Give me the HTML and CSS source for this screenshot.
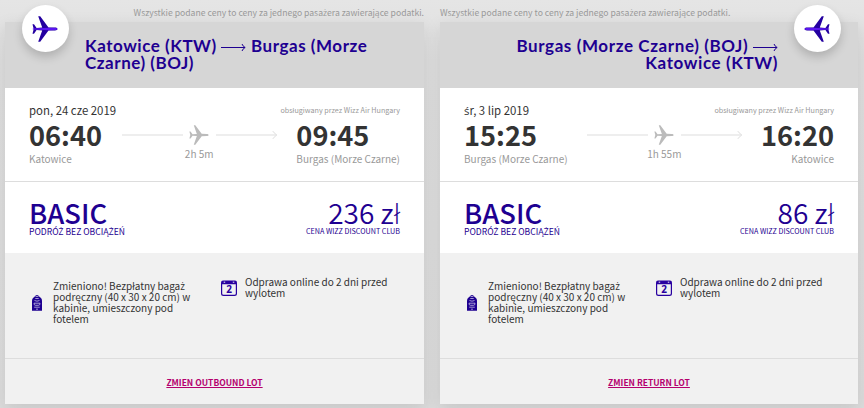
FILE: index.html
```html
<!DOCTYPE html>
<html lang="pl">
  <head>
    <meta charset="UTF-8" />
    <meta name="viewport" content="width=device-width, initial-scale=1.0" />
    <title>Wybrane loty</title>
    <link rel="stylesheet" href="styles.css" />
  </head>
  <body>
    <!-- shared icons -->
    <svg class="sprite">
      <symbol id="plane" viewBox="0 0 26 26">
        <path d="M25.5 13C25.5 12.3 24.5 11.6 23 11.6L16.5 11.4L8.2 0.3L6.2 0.2L10.2 11.6L4.6 12L2 8.3L0.5 8.3L1.7 13L0.5 17.7L2 17.7L4.6 14L10.2 14.4L6.2 25.8L8.2 25.7L16.5 14.6L23 14.4C24.5 14.4 25.5 13.7 25.5 13Z" />
        <path class="hull" d="M0.8 12.5L17 11.7L24.2 12L25.5 13L24.2 14L17 14.2L0.8 13.5Z" />
      </symbol>
      <symbol id="bag" viewBox="0 0 10 16">
        <path class="bag-line" d="M3.2 3V1.6Q3.2 0.6 5 0.6Q6.8 0.6 6.8 1.6V3" />
        <path class="bag-body" d="M0 15.8V6Q0 2 4 1.8H6Q10 2 10 6V15.8Z" />
        <path class="bag-cut" d="M3.3 3.5H6.7M2.5 5.5Q5 6.9 7.5 5.5M2 8.2H8M2 8.2Q1.8 10.3 3.5 10.3H6.5Q8.2 10.3 8 8.2M2.2 12.2H7.8M4 14.2H6" />
      </symbol>
      <symbol id="calendar" viewBox="0 0 16 16">
        <path class="cal-frame" d="M0.6 4V13.5Q0.6 15.4 2.5 15.4H13.5Q15.4 15.4 15.4 13.5V4" />
        <path d="M0 4.2V2.5Q0 0.5 2 0.5H14Q16 0.5 16 2.5V4.2Z" />
        <path class="cal-dots" d="M2.7 2.2H4.2M11.8 2.2H13.3" />
        <text x="8.2" y="13" text-anchor="middle">2</text>
      </symbol>
      <symbol id="arrow" viewBox="0 0 25 9">
        <path d="M0 4.5H24M21 1Q22.2 3.8 24.2 4.5Q22.2 5.2 21 8" />
      </symbol>
    </svg>

    <main class="flights">
      <section class="flight outbound">
        <p class="note">Wszystkie podane ceny to ceny za jednego pasa<span class="pl">ż</span>era zawierające podatki.</p>
        <div class="card">
          <header class="card-header">
            <div class="badge">
              <svg><use href="#plane" /></svg>
            </div>
            <h2>Katowice (KTW) <svg class="arrow"><use href="#arrow" /></svg> Burgas (Morze<br />Czarne) (BOJ)</h2>
          </header>
          <div class="info">
            <div class="info-top">
              <span class="date">pon, 24 cze 2019</span>
              <span class="carrier">obsługiwany przez Wizz Air Hungary</span>
            </div>
            <div class="times">
              <div class="stop">
                <strong>06:40</strong>
                <span class="city">Katowice</span>
              </div>
              <div class="route">
                <div class="track">
                  <i class="line"></i>
                  <svg class="plane"><use href="#plane" /></svg>
                  <i class="line end"></i>
                </div>
                <span class="duration">2h 5m</span>
              </div>
              <div class="stop">
                <strong>09:45</strong>
                <span class="city">Burgas (Morze Czarne)</span>
              </div>
            </div>
          </div>
          <div class="fare">
            <div>
              <div class="fare-name">BASIC</div>
              <div class="fare-desc">PODRÓ<span class="pl">Ż</span> BEZ OBCIĄ<span class="pl">Ż</span>EŃ</div>
            </div>
            <div class="fare-right">
              <div class="price">236 zł</div>
              <div class="club">CENA WIZZ DISCOUNT CLUB</div>
            </div>
          </div>
          <div class="features">
            <div class="feature baggage">
              <svg class="bag"><use href="#bag" /></svg>
              <p>Zmieniono! Bezpłatny baga<span class="pl">ż</span><br />podręczny (40 x 30 x 20 cm) w<br />kabinie, umieszczony pod<br />fotelem</p>
            </div>
            <div class="feature checkin">
              <svg class="calendar"><use href="#calendar" /></svg>
              <p>Odprawa online do 2 dni przed<br />wylotem</p>
            </div>
          </div>
          <footer class="card-footer"><a href="#">ZMIEN OUTBOUND LOT</a></footer>
        </div>
      </section>

      <section class="flight return">
        <p class="note">Wszystkie podane ceny to ceny za jednego pasa<span class="pl">ż</span>era zawierające podatki.</p>
        <div class="card">
          <header class="card-header">
            <div class="badge">
              <svg><use href="#plane" /></svg>
            </div>
            <h2>Burgas (Morze Czarne) (BOJ) <svg class="arrow"><use href="#arrow" /></svg><br />Katowice (KTW)</h2>
          </header>
          <div class="info">
            <div class="info-top">
              <span class="date"><span class="pl">ś</span>r, 3 lip 2019</span>
              <span class="carrier">obsługiwany przez Wizz Air Hungary</span>
            </div>
            <div class="times">
              <div class="stop">
                <strong>15:25</strong>
                <span class="city">Burgas (Morze Czarne)</span>
              </div>
              <div class="route">
                <div class="track">
                  <i class="line"></i>
                  <svg class="plane"><use href="#plane" /></svg>
                  <i class="line end"></i>
                </div>
                <span class="duration">1h 55m</span>
              </div>
              <div class="stop last">
                <strong>16:20</strong>
                <span class="city">Katowice</span>
              </div>
            </div>
          </div>
          <div class="fare">
            <div>
              <div class="fare-name">BASIC</div>
              <div class="fare-desc">PODRÓ<span class="pl">Ż</span> BEZ OBCIĄ<span class="pl">Ż</span>EŃ</div>
            </div>
            <div class="fare-right">
              <div class="price">86 zł</div>
              <div class="club">CENA WIZZ DISCOUNT CLUB</div>
            </div>
          </div>
          <div class="features">
            <div class="feature baggage">
              <svg class="bag"><use href="#bag" /></svg>
              <p>Zmieniono! Bezpłatny baga<span class="pl">ż</span><br />podręczny (40 x 30 x 20 cm) w<br />kabinie, umieszczony pod<br />fotelem</p>
            </div>
            <div class="feature checkin">
              <svg class="calendar"><use href="#calendar" /></svg>
              <p>Odprawa online do 2 dni przed<br />wylotem</p>
            </div>
          </div>
          <footer class="card-footer"><a href="#">ZMIEN RETURN LOT</a></footer>
        </div>
      </section>
    </main>
  </body>
</html>
```

FILE: styles.css
```css
* {
  margin: 0;
  padding: 0;
  box-sizing: border-box;
}
html,
body {
  height: 408px;
  overflow: hidden;
}
body {
  background: linear-gradient(#e5e5e5 0, #e3e3e3 22px, #dedede 60px, #dcdcdc 100%);
  font-family: "Noto Sans CJK SC", "Open Sans", sans-serif;
  color: #333;
  white-space: nowrap;
}
/* letters the main font has no glyph for */
.pl {
  font-family: "Open Sans", sans-serif;
  line-height: 0;
}
.sprite {
  display: none;
}
.flights {
  display: grid;
  grid-template-columns: 419px 418px;
  column-gap: 16px;
  padding-left: 5px;
}
.note {
  height: 22px;
  line-height: 25px;
  font-size: 8.65px;
  color: #999;
}
.outbound .note {
  text-align: right;
}
.card {
  height: 382px;
  background: #fff;
  box-shadow: 0 5px 16px rgba(0, 0, 0, 0.1);
}
.card-header {
  position: relative;
  height: 66px;
  padding: 15px 0 0 80px;
  background: #d6d6d6;
}
.return .card-header {
  padding: 15px 80px 0 0;
  text-align: right;
}
.card-header h2 {
  font-family: Lato, sans-serif;
  font-size: 17px;
  font-weight: 700;
  line-height: 17px;
  letter-spacing: 0.53px;
  color: #1e0091;
}
.return h2 {
  letter-spacing: 0.6px;
}
.arrow {
  width: 25px;
  height: 9px;
  fill: none;
  stroke: #1e0091;
  stroke-width: 1;
}
.badge {
  position: absolute;
  top: -17px;
  left: 17px;
  width: 47px;
  height: 47px;
  border-radius: 50%;
  background: #fff;
  box-shadow: 0 5px 10px rgba(0, 0, 0, 0.18);
  display: flex;
  align-items: center;
  justify-content: center;
}
.badge svg {
  --hull: #5a14f0;
  width: 26px;
  height: 26px;
  margin-right: 1px;
  fill: #2400a0;
}
.hull {
  fill: var(--hull, none);
}
.return .badge {
  left: auto;
  right: 17px;
}
.return .badge svg {
  transform: scaleX(-1);
}
.info {
  height: 94px;
  padding: 15px 24px 0;
  border-bottom: 1px solid #ddd;
}
.info-top {
  display: flex;
  justify-content: space-between;
  height: 14px;
  line-height: 15px;
}
.date {
  font-size: 11.4px;
}
.carrier {
  font-size: 7.2px;
  color: #999;
}
.times {
  display: flex;
  justify-content: space-between;
}
.stop strong {
  display: block;
  height: 35px;
  font-size: 27.2px;
  line-height: 35px;
}
.city,
.duration {
  display: block;
  font-size: 10px;
  line-height: 14px;
  color: #999;
}
.last {
  text-align: right;
}
.route {
  width: 155px;
  padding-top: 7px;
}
.track {
  display: flex;
  align-items: center;
  justify-content: space-between;
  height: 22px;
  margin-bottom: 1px;
}
.line {
  position: relative;
  width: 61px;
  height: 2px;
  background: #eee;
}
.line.end::after {
  content: "";
  position: absolute;
  right: 1px;
  top: -2px;
  width: 5px;
  height: 5px;
  border: solid #e6e6e6;
  border-width: 1px 1px 0 0;
  transform: rotate(45deg);
}
.plane {
  width: 20px;
  height: 20px;
  fill: #bbb;
}
.duration {
  text-align: center;
}
.fare {
  display: flex;
  justify-content: space-between;
  height: 71px;
  padding: 14px 24px 0;
  color: #1e0091;
}
.fare-name,
.price {
  height: 30px;
  font-size: 27.4px;
  line-height: 32px;
}
.fare-name {
  font-weight: 500;
}
.price {
  font-size: 28px;
  font-weight: 350;
}
.fare-desc,
.club {
  font-size: 8.6px;
  line-height: 11px;
}
.club {
  font-size: 7.2px;
}
.fare-right {
  text-align: right;
}
.features {
  display: grid;
  grid-template-columns: 192px 1fr;
  height: 105px;
  padding: 25px 24px 0;
  background: #f1f1f1;
}
.feature {
  display: flex;
  align-items: flex-start;
  font-size: 10px;
  line-height: 11px;
}
.baggage {
  padding-top: 2px;
}
.baggage p {
  margin-left: 11px;
}
.checkin p {
  margin: -2px 0 0 8px;
}
.bag {
  width: 10px;
  height: 16px;
  margin: 15px 0 0 3px;
}
.bag-body {
  fill: #1e0091;
}
.bag-line {
  fill: none;
  stroke: #1e0091;
}
.bag-cut {
  fill: none;
  stroke: #c6bfe4;
  stroke-width: 0.8;
}
.calendar {
  width: 16px;
  height: 16px;
  margin-top: 2px;
  fill: #2800a0;
  font-family: "Open Sans", sans-serif;
  font-size: 10px;
  font-weight: 700;
}
.cal-frame {
  fill: none;
  stroke: #2800a0;
  stroke-width: 1.2;
}
.cal-dots {
  stroke: #f1f1f1;
}
.card-footer {
  height: 46px;
  border-top: 1px solid #ddd;
  background: #f1f1f1;
  text-align: center;
  line-height: 40px;
}
.card-footer a {
  font-size: 8.5px;
  font-weight: 700;
  color: #b4006e;
  text-underline-offset: 1px;
}
```
